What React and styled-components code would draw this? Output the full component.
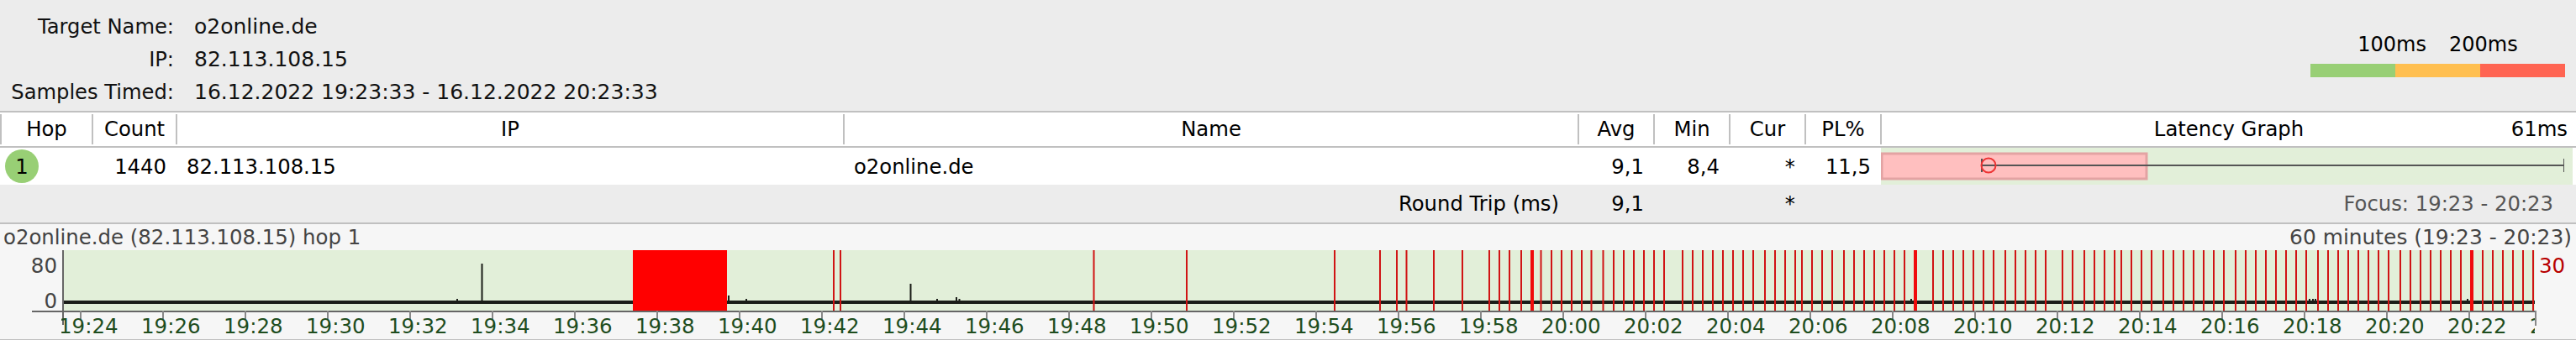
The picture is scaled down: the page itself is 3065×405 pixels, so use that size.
import React from 'react';
import styled, { createGlobalStyle } from 'styled-components';

const Global = createGlobalStyle`
  *, *::before, *::after { box-sizing: border-box; }
  html, body { margin: 0; padding: 0; background: #ececec; }
  body { font-family: "DejaVu Sans", Verdana, sans-serif; color: #000; }
`;

const Page = styled.div`
  width: 3065px;
  height: 405px;
  overflow: hidden;
  display: flex;
  flex-direction: column;
  background: #ececec;
`;

const TopPanel = styled.header`
  height: 132px;
  display: flex;
  justify-content: space-between;
  flex: none;
`;

const Info = styled.dl`
  margin: 12px 0 0;
  display: grid;
  grid-template-columns: 207px auto;
  column-gap: 24px;
  grid-auto-rows: 39px;
  align-items: center;
  align-content: start;
`;

const InfoLabel = styled.dt`
  text-align: right;
  color: #111;
  font-size: 24.2px;
`;

const InfoValue = styled.dd`
  margin: 0;
  color: #111;
  font-size: 25px;
`;

const Legend = styled.div`
  width: 303px;
  margin: 37px 13px 0 0;
  display: flex;
  flex-direction: column;
`;

const LegendLabels = styled.div`
  height: 32px;
  display: flex;
  justify-content: center;
  gap: 27px;
  font-size: 24px;
  line-height: 32px;
  margin-bottom: 7px;
  white-space: nowrap;
`;

const LegendBar = styled.div`
  display: flex;
  height: 16px;
`;

const LegendSwatch = styled.span`
  flex: 1;
  background: ${p => p.$color};
`;

const TableRow = styled.div`
  display: grid;
  grid-template-columns: 109px 100px 794px 874px 90px 90px 90px 90px 1fr;
  flex: none;
  height: ${p => p.$height}px;
  background: ${p => p.$bg};
  border-top: ${p => (p.$rule ? '2px solid #c0c0c0' : 'none')};
  border-bottom: ${p => (p.$ruleBottom ? '2px solid #c0c0c0' : 'none')};
  font-size: 24.3px;
`;

const HeadCell = styled.div`
  margin: 2px 0;
  border-left: 2px solid #c0c0c0;
  display: flex;
  align-items: center;
  justify-content: center;
  padding-bottom: 1px;
`;

const HeadGraphCell = styled(HeadCell)`
  display: grid;
  grid-template-columns: 1fr auto 1fr;
`;

const GraphMax = styled.span`
  justify-self: end;
  padding-right: 10px;
`;

const Cell = styled.div`
  display: flex;
  align-items: center;
  justify-content: ${p => (p.$left ? 'flex-start' : 'flex-end')};
  padding: ${p => (p.$left ? '0 0 0 13px' : '0 11px 0 0')};
  white-space: nowrap;
  overflow: hidden;
`;

const HopCell = styled.div`
  display: flex;
  align-items: center;
  padding-left: 6px;
`;

const HopBadge = styled.span`
  width: 40px;
  height: 40px;
  border-radius: 50%;
  background: #98cf75;
  display: flex;
  align-items: center;
  justify-content: center;
`;

const GraphCell = styled.div`
  background: #e2efd9;
  margin-right: 4px;
  margin-left: 1px;
`;

const BoxPlot = styled.svg`
  display: block;
  width: 822px;
  height: 44px;
`;

const Wide = styled(Cell)`
  padding-right: 22px;
`;

const Focus = styled(Cell)`
  padding-right: 27px;
  color: #555;
`;

const ChartPanel = styled.section`
  flex: 1;
  min-height: 0;
  background: #f6f6f6;
  display: flex;
  flex-direction: column;
  border-bottom: 1px solid #c0c0c0;
`;

const ChartTitle = styled.div`
  height: 31px;
  flex: none;
  display: flex;
  justify-content: space-between;
  align-items: center;
  padding: 0 5px 0 4px;
  font-size: 24.4px;
  color: #444;
  white-space: nowrap;
`;

const ChartRange = styled.span`
  font-size: 24.9px;
`;

const ChartSvg = styled.svg`
  display: block;
  flex: none;
  width: 3065px;
  height: 106px;
  font-family: "DejaVu Sans", Verdana, sans-serif;
  font-size: 24.5px;
`;

const T = 298; // page y of the top of the chart svg
const y = v => v - T;

const thin = [992, 1000, 1301.5, 1412, 1588, 1642, 1662, 1673.5, 1706, 1740, 1772, 1784, 1796, 1810, 1833.5, 1846, 1858, 1870, 1882, 1893.5, 1907.5, 1920, 1932, 1944, 1956, 1968,
  1980, 2002, 2014, 2026, 2038, 2050, 2062, 2074, 2086, 2100, 2112, 2124, 2136, 2144, 2156, 2168, 2180, 2194, 2206, 2218, 2230, 2242, 2254, 2266, 2300, 2312,
  2324, 2336, 2348, 2360, 2372, 2386, 2398, 2410, 2422, 2434, 2454, 2466, 2480, 2492, 2504, 2516, 2524, 2536, 2548, 2560, 2574, 2586, 2598, 2610, 2622, 2634, 2646, 2660,
  2672, 2684, 2696, 2708, 2720, 2732, 2744, 2758, 2770, 2782, 2794, 2806, 2818, 2830, 2842, 2856, 2868, 2880, 2892, 2904, 2916, 2928, 2954, 2966, 2978, 2990, 3002, 3014];
const thick = [1823, 2279, 2941];
const spikes = [[544, 356], [573.5, 314], [867, 352], [888, 356], [1083.5, 338], [1115, 356], [1138, 354], [1141.5, 356], [2274, 356], [2748, 356], [2752, 356], [2755, 356], [2936, 356]];

const times = [];
for (let i = 0; i < 31; i++) {
  const m = 24 + i * 2;
  const h = m >= 60 ? 20 : 19;
  times.push(`${h}:${String(m % 60).padStart(2, '0')}`);
}

const TimeChart = () => (
  <ChartSvg viewBox="0 0 3065 106">
    <defs>
      <clipPath id="labels"><rect x="73" y="70" width="2943" height="36" /></clipPath>
    </defs>
    <rect x="76" y="0" width="2940" height="72" fill="#e2efd9" />
    <rect x="76" y={y(358)} width="2940" height="4" fill="#1a1d18" />
    {spikes.map(([x, top]) => <rect key={x} x={x - 1} y={y(top)} width="2" height={358 - top} fill="#1a1d18" />)}
    <rect x="753" y="0" width="112" height="72" fill="#ff0000" />
    {thin.map(x => <rect key={x} x={x - 1} y="0" width="2" height="72" fill="#d01414" />)}
    {thick.map(x => <rect key={x} x={x - 2} y="0" width="4" height="72" fill="#f00c0c" />)}
    <rect x="38" y={y(370)} width="2980" height="2" fill="#666" />
    <rect x="74" y="0" width="2" height="89" fill="#666" />
    <rect x="3016" y={y(370)} width="2" height="18" fill="#888" />
    {times.slice(0, 30).map((_, i) => <rect key={i} x={95 + i * 98} y={y(370)} width="2" height="10" fill="#888" />)}
    <g clipPath="url(#labels)" fill="#1e4d1e">
      {times.map((t, i) => <text key={t} x={70 + i * 98} y={y(397)}>{t}</text>)}
    </g>
    <text x="68" y={y(325)} fill="#444" textAnchor="end">80</text>
    <text x="68" y={y(367)} fill="#444" textAnchor="end">0</text>
    <text x="3021" y={y(325)} fill="#b80000">30</text>
  </ChartSvg>
);

export default function App() {
  return (
    <Page>
      <Global />
      <TopPanel>
        <Info>
          <InfoLabel>Target Name:</InfoLabel><InfoValue>o2online.de</InfoValue>
          <InfoLabel>IP:</InfoLabel><InfoValue>82.113.108.15</InfoValue>
          <InfoLabel>Samples Timed:</InfoLabel><InfoValue>16.12.2022 19:23:33 - 16.12.2022 20:23:33</InfoValue>
        </Info>
        <Legend>
          <LegendLabels><span>100ms</span><span>200ms</span></LegendLabels>
          <LegendBar>
            <LegendSwatch $color="#98cf75" />
            <LegendSwatch $color="#ffbf50" />
            <LegendSwatch $color="#ff6452" />
          </LegendBar>
        </Legend>
      </TopPanel>
      <TableRow $height={44} $bg="#fff" $rule $ruleBottom>
        <HeadCell>Hop</HeadCell>
        <HeadCell>Count</HeadCell>
        <HeadCell>IP</HeadCell>
        <HeadCell>Name</HeadCell>
        <HeadCell>Avg</HeadCell>
        <HeadCell>Min</HeadCell>
        <HeadCell>Cur</HeadCell>
        <HeadCell>PL%</HeadCell>
        <HeadGraphCell><span /><span>Latency Graph</span><GraphMax>61ms</GraphMax></HeadGraphCell>
      </TableRow>
      <TableRow $height={44} $bg="#fff">
        <HopCell><HopBadge>1</HopBadge></HopCell>
        <Cell>1440</Cell>
        <Cell $left>82.113.108.15</Cell>
        <Cell $left>o2online.de</Cell>
        <Cell>9,1</Cell>
        <Cell>8,4</Cell>
        <Cell>*</Cell>
        <Cell>11,5</Cell>
        <GraphCell>
          <BoxPlot viewBox="0 0 822 44">
            <rect x="1" y="7" width="315" height="30" fill="#ffbfbf" stroke="#e3a3a3" strokeWidth="3" />
            <rect x="120" y="20" width="693" height="2" fill="#555" />
            <rect x="119" y="13" width="2" height="16" fill="#555" />
            <rect x="812" y="13" width="1" height="16" fill="#555" />
            <circle cx="128" cy="21" r="8.5" fill="none" stroke="#e33" strokeWidth="2" />
          </BoxPlot>
        </GraphCell>
      </TableRow>
      <TableRow $height={47} $bg="#ececec" $ruleBottom>
        <span /><span /><span />
        <Wide>Round Trip (ms)</Wide>
        <Cell>9,1</Cell>
        <span />
        <Cell>*</Cell>
        <span />
        <Focus>Focus: 19:23 - 20:23</Focus>
      </TableRow>
      <ChartPanel>
        <ChartTitle>
          <span>o2online.de (82.113.108.15) hop 1</span>
          <ChartRange>60 minutes (19:23 - 20:23)</ChartRange>
        </ChartTitle>
        <TimeChart />
      </ChartPanel>
    </Page>
  );
}
